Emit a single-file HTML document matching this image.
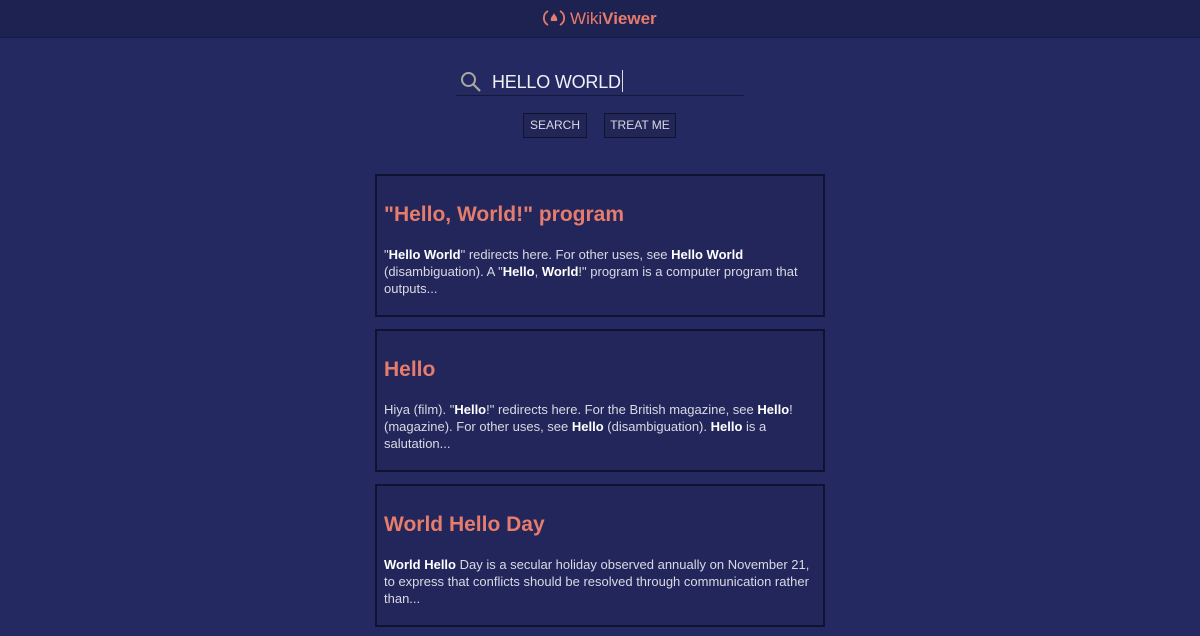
<!DOCTYPE html>
<html><head><meta charset="utf-8"><style>
*{margin:0;padding:0;box-sizing:border-box}
body{width:1200px;height:636px;overflow:hidden;background:#252962;font-family:"Liberation Sans",sans-serif;color:#e4e4ee}
.hdr{height:38px;background:#1e2250;border-bottom:1px solid #171a40;text-align:center;font-size:17px;line-height:38px;color:#e57c6c}
.hdr b{font-weight:bold}
.srch{position:absolute;left:456px;top:66px;width:288px;height:30px;border-bottom:1px solid #15183a}
.srch .t{position:absolute;left:36px;top:4px;font-size:18px;color:#f0f0f5;letter-spacing:-0.2px}
.srch .c{display:inline-block;width:1px;height:22px;background:#ddd;vertical-align:-4px;margin-left:1px}
.btn{position:absolute;top:113px;height:25px;border:1px solid #11142f;background:#222657;font-size:12px;color:#d8d8e4;line-height:23px;text-align:center}
.card{position:absolute;left:375px;width:450px;height:143px;border:2px solid #0f1230;background:#22265a;padding:0 7px}
.card h2{margin-top:27px;font-size:21px;color:#e57c6c;font-weight:bold;height:24px}
.card p{margin-top:19px;font-size:13px;line-height:17px;color:#d9d9e4}
.card p b{color:#fff}
</style></head><body>
<div class="hdr"><svg width="22" height="18" viewBox="0 0 22 18" style="vertical-align:-3px"><path d="M5 2 A8 8 0 0 0 5 16 M17 2 A8 8 0 0 1 17 16" stroke="#e57c6c" stroke-width="1.8" fill="none"/><path d="M7 13 h8 M8 12 C7 8 10 7 11 4 C12 7 15 8 14 12 Z" fill="#e57c6c"/></svg> Wiki<b>Viewer</b></div>
<div class="srch"><svg style="position:absolute;left:4px;top:5px" width="22" height="22" viewBox="0 0 22 22"><circle cx="8.5" cy="8.5" r="6.5" stroke="#a9a9a0" stroke-width="2" fill="none"/><path d="M13.5 13.5 L20 20" stroke="#a9a9a0" stroke-width="2.2"/></svg><div class="t">HELLO WORLD<span class="c"></span></div></div>
<div class="btn" style="left:523px;width:64px">SEARCH</div>
<div class="btn" style="left:604px;width:72px">TREAT ME</div>
<div class="card" style="top:174px"><h2>"Hello, World!" program</h2><p>"<b>Hello World</b>" redirects here. For other uses, see <b>Hello World</b> (disambiguation). A "<b>Hello</b>, <b>World</b>!" program is a computer program that outputs...</p></div>
<div class="card" style="top:329px"><h2>Hello</h2><p>Hiya (film). "<b>Hello</b>!" redirects here. For the British magazine, see <b>Hello</b>! (magazine). For other uses, see <b>Hello</b> (disambiguation). <b>Hello</b> is a salutation...</p></div>
<div class="card" style="top:484px"><h2>World Hello Day</h2><p><b>World Hello</b> Day is a secular holiday observed annually on November 21, to express that conflicts should be resolved through communication rather than...</p></div>
</body></html>
